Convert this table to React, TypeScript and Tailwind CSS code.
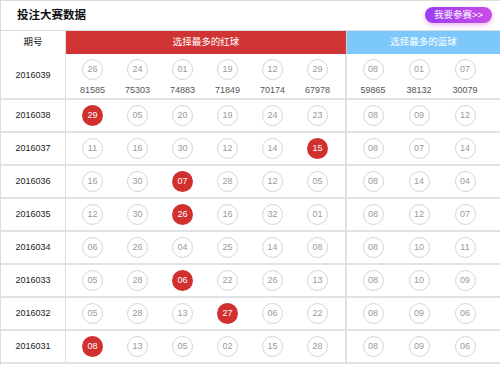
import React from "react";

type Row = { p: string; red: string[]; hit: number; blue: string[] };

const rows: Row[] = [
  { p: "2016038", red: ["29", "05", "20", "19", "24", "23"], hit: 0, blue: ["08", "09", "12"] },
  { p: "2016037", red: ["11", "16", "30", "12", "14", "15"], hit: 5, blue: ["08", "07", "14"] },
  { p: "2016036", red: ["16", "30", "07", "28", "12", "05"], hit: 2, blue: ["08", "14", "04"] },
  { p: "2016035", red: ["12", "30", "26", "16", "32", "01"], hit: 2, blue: ["08", "12", "07"] },
  { p: "2016034", red: ["06", "26", "04", "25", "14", "08"], hit: -1, blue: ["08", "10", "11"] },
  { p: "2016033", red: ["05", "28", "06", "22", "26", "13"], hit: 2, blue: ["08", "10", "09"] },
  { p: "2016032", red: ["05", "28", "13", "27", "06", "22"], hit: 3, blue: ["08", "09", "06"] },
  { p: "2016031", red: ["08", "13", "05", "02", "15", "28"], hit: 0, blue: ["08", "09", "06"] },
];

const font = { fontFamily: '"Liberation Sans", Arial, "Noto Sans CJK SC", sans-serif' };

function Ball({ n, on }: { n: string; on?: boolean }) {
  return on ? (
    <div className="w-[21px] h-[21px] rounded-full bg-[#d22f2f] text-white text-[9px] flex items-center justify-center leading-none">
      {n}
    </div>
  ) : (
    <div className="w-[21px] h-[21px] rounded-full border border-[#d4d4d4] text-[#9a9a9a] text-[9px] flex items-center justify-center leading-none bg-white">
      {n}
    </div>
  );
}

export default function App() {
  const firstRed = ["26", "24", "01", "19", "12", "29"];
  const firstRedN = ["81585", "75303", "74883", "71849", "70174", "67978"];
  const firstBlue = ["08", "01", "07"];
  const firstBlueN = ["59865", "38132", "30079"];
  return (
    <div className="w-[500px] h-[365px] overflow-hidden bg-white border-l border-t border-[#dcdcdc]" style={font}>
      <div className="h-[30px] flex items-center justify-between border-b border-[#dcdcdc] pl-[16px] pr-[8px]">
        <div className="text-[11.5px] font-bold text-[#111] pt-[1px]">投注大赛数据</div>
        <div className="h-[16px] w-[67px] rounded-full bg-gradient-to-r from-[#9a3cf3] to-[#c94be6] text-white text-[9.5px] flex items-center justify-center shadow-[0_2px_5px_rgba(220,90,220,0.45)] mb-[1px]">
          我要参赛&gt;&gt;
        </div>
      </div>
      <div className="h-[23px] flex">
        <div className="w-[65px] border-r border-[#dcdcdc] flex items-center justify-center text-[9.5px] text-[#222]">期号</div>
        <div className="w-[281px] bg-[#d13434] flex items-center justify-center text-[9.5px] text-white border-r border-[#d0d0d0]">选择最多的红球</div>
        <div className="flex-1 bg-[#7dc8fb] flex items-center justify-center text-[9.5px] text-white">选择最多的蓝球</div>
      </div>
      <div className="h-[46px] flex border-b-2 border-[#e2e2e2]">
        <div className="w-[65px] border-r border-[#dcdcdc] flex items-center justify-center text-[9px] text-[#222]">2016039</div>
        <div className="w-[281px] border-r-2 border-[#e2e2e2] grid grid-cols-[repeat(6,45px)] pl-[4px] pt-[5px]">
          {firstRed.map((n, i) => (
            <div key={i} className="flex flex-col items-center">
              <Ball n={n} />
              <div className="text-[9px] text-[#555] mt-[6px] leading-none">{firstRedN[i]}</div>
            </div>
          ))}
        </div>
        <div className="flex-1 grid grid-cols-[repeat(3,46px)] pl-[3px] pt-[5px]">
          {firstBlue.map((n, i) => (
            <div key={i} className="flex flex-col items-center">
              <Ball n={n} />
              <div className="text-[9px] text-[#555] mt-[6px] leading-none">{firstBlueN[i]}</div>
            </div>
          ))}
        </div>
      </div>
      {rows.map((r) => (
        <div key={r.p} className="h-[33px] flex border-b-2 border-[#e2e2e2]">
          <div className="w-[65px] border-r border-[#dcdcdc] flex items-center justify-center text-[9px] text-[#222]">{r.p}</div>
          <div className="w-[281px] border-r-2 border-[#e2e2e2] grid grid-cols-[repeat(6,45px)] pl-[4px] items-center">
            {r.red.map((n, i) => (
              <div key={i} className="flex justify-center">
                <Ball n={n} on={i === r.hit} />
              </div>
            ))}
          </div>
          <div className="flex-1 grid grid-cols-[repeat(3,46px)] pl-[3px] items-center">
            {r.blue.map((n, i) => (
              <div key={i} className="flex justify-center">
                <Ball n={n} />
              </div>
            ))}
          </div>
        </div>
      ))}
    </div>
  );
}
